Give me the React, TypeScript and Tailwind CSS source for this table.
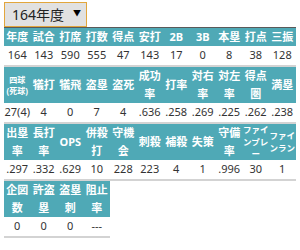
import React from "react";

type Col = { h: React.ReactNode; v: string };

const H = (lines: string[], cls = "") => (
  <span className={cls}>
    {lines.map((l, i) => (
      <React.Fragment key={i}>
        {i > 0 && <br />}
        {l}
      </React.Fragment>
    ))}
  </span>
);

const t1: Col[] = [
  { h: "年度", v: "164" },
  { h: "試合", v: "143" },
  { h: "打席", v: "590" },
  { h: "打数", v: "555" },
  { h: "得点", v: "47" },
  { h: "安打", v: "143" },
  { h: "2B", v: "17" },
  { h: "3B", v: "0" },
  { h: "本塁", v: "8" },
  { h: "打点", v: "38" },
  { h: "三振", v: "128" },
];

const t2: Col[] = [
  { h: H(["四球", "(死球)"], "text-[8px] leading-[11px]"), v: "27(4)" },
  { h: "犠打", v: "4" },
  { h: "犠飛", v: "0" },
  { h: "盗塁", v: "7" },
  { h: "盗死", v: "4" },
  { h: H(["成功", "率"]), v: ".636" },
  { h: "打率", v: ".258" },
  { h: H(["対右", "率"]), v: ".269" },
  { h: H(["対左", "率"]), v: ".225" },
  { h: H(["得点", "圏"]), v: ".262" },
  { h: "満塁", v: ".238" },
];

const t3: Col[] = [
  { h: H(["出塁", "率"]), v: ".297" },
  { h: H(["長打", "率"]), v: ".332" },
  { h: "OPS", v: ".629" },
  { h: H(["併殺", "打"]), v: "10" },
  { h: H(["守機", "会"]), v: "228" },
  { h: "刺殺", v: "223" },
  { h: "補殺", v: "4" },
  { h: "失策", v: "1" },
  { h: H(["守備", "率"]), v: ".996" },
  { h: H(["ファイ", "ンプレ", "ー"], "text-[8.5px] leading-[12px]"), v: "30" },
  { h: H(["ファイ", "ンラン"], "text-[8.5px] leading-[12px]"), v: "1" },
];

const t4: Col[] = [
  { h: H(["企図", "数"]), v: "0" },
  { h: H(["許盗", "塁"]), v: "0" },
  { h: H(["盗塁", "刺"]), v: "0" },
  { h: H(["阻止", "率"]), v: "---" },
];

function Table({ cols, tall, top }: { cols: Col[]; tall?: boolean; top?: boolean }) {
  return (
    <div className={`flex w-max border-b-2 border-[#d3d3d3] ${top ? "border-t border-t-[#5a5a5a]" : ""}`}>
      {cols.map((c, i) => (
        <div key={i} className="flex w-[26.5px] flex-col">
          <div
            className={`flex items-center justify-center bg-[#4fa9b6] text-center text-[11px] font-bold leading-[18px] text-white ${
              tall ? "h-[36px]" : "h-[18px]"
            }`}
          >
            {c.h}
          </div>
          <div className="flex h-[19px] items-center justify-center whitespace-nowrap text-[11px] text-[#333]">
            {c.v}
          </div>
        </div>
      ))}
    </div>
  );
}

export default function App() {
  return (
    <div
      className="h-[250px] w-[300px] bg-white px-[4px] pt-[2px]"
      style={{ fontFamily: '"Noto Sans", "Noto Sans CJK JP", sans-serif' }}
    >
      <div className="relative flex h-[25px] w-[83px] items-center border border-[#e2a63c] bg-[#e1e1e1] pl-[7px] text-[14px] text-[#222]">
        164年度
        <span className="absolute right-[5px] top-[6px] text-[8px] leading-none text-black">▼</span>
      </div>
      <div className="flex flex-col">
        <Table cols={t1} top />
        <Table cols={t2} tall />
        <Table cols={t3} tall />
        <Table cols={t4} tall />
      </div>
    </div>
  );
}
